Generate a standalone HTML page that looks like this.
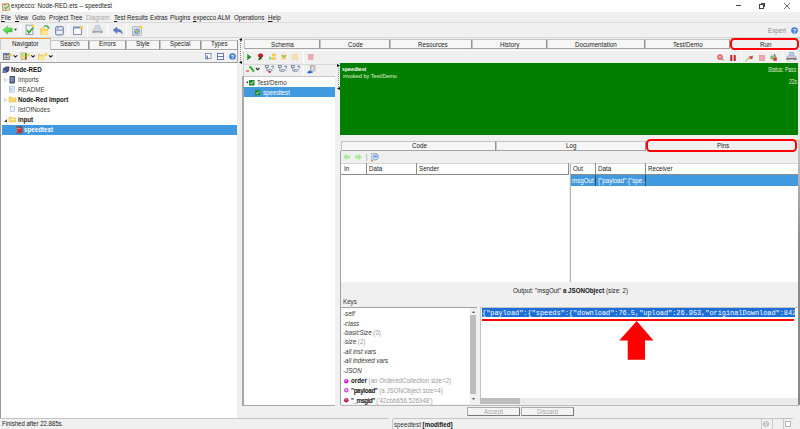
<!DOCTYPE html>
<html><head><meta charset="utf-8">
<style>
*{margin:0;padding:0;box-sizing:border-box}
html,body{width:800px;height:429px;overflow:hidden;background:#f0f0f0;font-family:"Liberation Sans",sans-serif;font-size:6.2px;color:#1a1a1a;position:relative}
.a{position:absolute}
.t{position:absolute;white-space:nowrap;line-height:8px;font-size:6.9px;transform:scaleX(0.9);transform-origin:0 0}
.b{font-weight:bold}
.g{color:#9a9a9a}
.tab{position:absolute;background:#f6f6f6;border:1px solid #c4c4c4;border-right-color:#949494;border-bottom-color:#a4a4a4}
.sep{position:absolute;width:1px;background:#c8c8c8;border-right:1px solid #fff}
.white{background:#fff}
.sel{background:#4199e0}
svg{position:absolute;overflow:visible}
u{text-decoration-thickness:0.7px;text-underline-offset:0.6px}
</style></head><body>
<!-- ================= title bar ================= -->
<div class="a" style="left:0;top:0;width:800px;height:12px;background:#fff"></div>
<svg style="left:0.5px;top:1.5px" width="10" height="9" viewBox="0 0 10 9"><path d="M1 2 L7.5 1.5 L8.8 8 L2 8.6Z" fill="#dce8f8" stroke="#d49a50" stroke-width="1.1" stroke-linejoin="round"/><path d="M2.5 2.2 L5.5 2 L5.3 3.2 L2.6 3.4Z" fill="#c87070"/><path d="M3 5 L4.8 6.8 L8.6 2.6" stroke="#5cc04a" stroke-width="1.3" fill="none"/></svg>
<div class="t" style="left:11px;top:2px;color:#222">expecco: Node-RED.ets -- speedtest</div>
<div class="a" style="left:736px;top:5px;width:5px;height:1px;background:#444"></div>
<div class="a" style="left:759px;top:4px;width:5px;height:5px;border:1px solid #444"></div>
<div class="a" style="left:761px;top:3px;width:4px;height:4px;border-top:1px solid #444;border-right:1px solid #444"></div>
<svg style="left:784px;top:3px" width="6" height="6" viewBox="0 0 6 6"><path d="M0 0L6 6M6 0L0 6" stroke="#444" stroke-width="0.8"/></svg>

<!-- ================= menu ================= -->
<div class="a" style="left:0;top:22px;width:800px;height:1px;background:#dadada"></div>
<div class="t" style="left:1px;top:14px"><u>F</u>ile</div>
<div class="t" style="left:14.6px;top:14px"><u>V</u>iew</div>
<div class="t" style="left:31.5px;top:14px">Goto</div>
<div class="t" style="left:49px;top:14px">Project Tree</div>
<div class="t" style="left:86px;top:14px;color:#a8a8a8">Diagram</div>
<div class="t" style="left:114px;top:14px"><u>T</u>est Results</div>
<div class="t" style="left:149.8px;top:14px">Extras</div>
<div class="t" style="left:170px;top:14px">Plugins</div>
<div class="t" style="left:193px;top:14px"><u>e</u>xpecco ALM</div>
<div class="t" style="left:233.8px;top:14px">Operations</div>
<div class="t" style="left:268px;top:14px"><u>H</u>elp</div>

<!-- ================= toolbar ================= -->
<div class="sep" style="left:20px;top:24px;height:13px"></div>
<div class="sep" style="left:68px;top:24px;height:13px"></div>
<div class="sep" style="left:87px;top:24px;height:13px"></div>
<div class="sep" style="left:107px;top:24px;height:13px"></div>
<div class="sep" style="left:125.5px;top:24px;height:13px"></div>
<!-- green back arrow -->
<svg style="left:0;top:22px" width="20" height="16" viewBox="0 0 20 16"><defs><linearGradient id="ga" x1="0" y1="0" x2="0.6" y2="1"><stop offset="0" stop-color="#9af59a"/><stop offset="1" stop-color="#28c028"/></linearGradient></defs><path d="M2.7 8.1 L7.7 3.8 L7.7 5.9 L12.2 5.9 L12.2 9.9 L7.7 9.9 L7.7 12.3 Z" fill="url(#ga)" stroke="#3cc03c" stroke-width="0.4" stroke-linejoin="round"/><path d="M14 6.8H17.1L15.55 8.8Z" fill="#333"/></svg>
<!-- checkbox doc -->
<svg style="left:25px;top:24px" width="10" height="11" viewBox="0 0 10 11"><rect x="1.1" y="1.2" width="6.8" height="9.2" fill="#f4f6fa" stroke="#7d8ca6" stroke-width="0.8"/><path d="M2.3 5.8 L3.9 8.8 L8.2 3.6" stroke="#22b022" stroke-width="1.5" fill="none"/><circle cx="8" cy="2" r="1.4" fill="#f8d448"/></svg>
<!-- folder -->
<svg style="left:39px;top:24px" width="11" height="11" viewBox="0 0 11 11"><path d="M1.5 4.5 L4 3.5 L5.5 5 L8.5 5 L8.5 10.5 L1.5 10.5 Z" fill="#f5d868" stroke="#e6bc3a" stroke-width="0.5"/><path d="M1.5 10.5 L3 7 L9.5 7 L8.5 10.5Z" fill="#fbe890"/><path d="M5 2.5 Q8 0.8 9.5 3.6" stroke="#2fae2f" stroke-width="1.4" fill="none"/><path d="M8.2 4.6 L10.2 2.6 L10.4 4.8Z" fill="#2fae2f"/></svg>
<!-- save -->
<svg style="left:54.5px;top:25.5px" width="9" height="9.5" viewBox="0 0 9 9.5"><rect x="0.7" y="0.7" width="7.6" height="8.2" rx="1" fill="#e8eef8" stroke="#6474aa" stroke-width="1"/><rect x="1.4" y="3.6" width="6.2" height="0.9" fill="#6474aa"/><rect x="2" y="1.4" width="1.2" height="1.2" fill="#6474aa"/></svg>
<!-- new doc -->
<svg style="left:73px;top:25.5px" width="10" height="9" viewBox="0 0 10 9"><rect x="0.5" y="1" width="8" height="7.5" fill="#fafafa" stroke="#8290b8"/><rect x="0.5" y="1" width="8" height="1.5" fill="#8290b8"/><circle cx="8.5" cy="1.5" r="1.5" fill="#f5d040"/></svg>
<!-- printer -->
<svg style="left:92px;top:25px;opacity:0.65" width="11" height="10" viewBox="0 0 11 10"><defs><linearGradient id="prga" x1="0" y1="0" x2="0" y2="1"><stop offset="0" stop-color="#e8e8e8"/><stop offset="1" stop-color="#8a8a8a"/></linearGradient></defs><path d="M3.5 0.5 L7.5 0.2 L8.3 4.5 L3.2 4.7Z" fill="#b8cdf0" stroke="#7890c0" stroke-width="0.5"/><path d="M0.6 5.5 Q0.6 4 2.5 4 L8.5 4 Q10.4 4 10.4 5.5 L10.4 8 L0.6 8Z" fill="url(#prga)" stroke="#808080" stroke-width="0.4"/><rect x="2.2" y="7.4" width="6.6" height="2.2" fill="#fafafa" stroke="#a0a0a0" stroke-width="0.3"/><rect x="1" y="6.4" width="9" height="0.9" fill="#5a5a5a"/></svg>
<!-- undo -->
<svg style="left:113px;top:27px" width="10" height="7" viewBox="0 0 10 7"><path d="M0 3 L4 0 L4 2 Q9 2 9.5 7 Q8 4.5 4 4.5 L4 6.5 Z" fill="#5d7fc8" stroke="#44609e" stroke-width="0.4"/></svg>
<!-- browser -->
<svg style="left:131.5px;top:25.5px" width="11" height="10" viewBox="0 0 11 10"><rect x="0.5" y="0.5" width="9" height="9" rx="1" fill="#d8e2ef" stroke="#8a9ab5" stroke-width="0.6"/><circle cx="5" cy="5.5" r="3" fill="#6fa8dc"/><path d="M3 4 L7 7" stroke="#f0c020" stroke-width="1.2"/><circle cx="9" cy="1.5" r="1.6" fill="#f5d040"/><circle cx="1.2" cy="8.8" r="0.9" fill="#f08020"/></svg>
<div class="t g" style="left:767.8px;top:26.7px;color:#8a8a8a">Expert</div>
<svg style="left:790.5px;top:27px" width="7" height="7" viewBox="0 0 7 7"><circle cx="3.5" cy="3.5" r="3.3" fill="#3d7fdc"/><text x="3.5" y="5.6" font-size="5.5" font-weight="bold" fill="#fff" text-anchor="middle" font-family="Liberation Sans">?</text></svg>

<div class="a" style="left:0;top:36.8px;width:800px;height:1.6px;background:#d6d6d6"></div>
<!-- ================= left panel ================= -->
<div class="a" style="left:0;top:37.6px;width:50.5px;height:12.4px;background:#f0f0f0;border-top:1.3px solid #f2a546;border-right:1px solid #c0c0c0;border-left:1px solid #c8c8c8"></div>
<div class="t" style="left:12px;top:40px;color:#1a1a1a">Navigator</div>
<div class="tab" style="left:50px;top:39.5px;width:38.5px;height:10px"></div>
<div class="t" style="left:60px;top:40px">Search</div>
<div class="tab" style="left:88.5px;top:39.5px;width:37.2px;height:10px"></div>
<div class="t" style="left:99px;top:40px">Errors</div>
<div class="tab" style="left:125.7px;top:39.5px;width:34px;height:10px"></div>
<div class="t" style="left:135.7px;top:40px">Style</div>
<div class="tab" style="left:159.7px;top:39.5px;width:41px;height:10px"></div>
<div class="t" style="left:169.5px;top:40px">Special</div>
<div class="tab" style="left:200.7px;top:39.5px;width:37px;height:10px"></div>
<div class="t" style="left:210.7px;top:40px">Types</div>
<!-- left toolbar -->
<div class="a" style="left:0;top:49.5px;width:238px;height:1px;background:#fff"></div>
<div class="sep" style="left:55px;top:50px;height:12px"></div>
<div class="a" style="left:0;top:62px;width:238px;height:1px;background:#a0a0a0"></div>
<svg style="left:0;top:50px" width="56" height="12" viewBox="0 0 56 12">
<rect x="3" y="3" width="6.8" height="7" fill="#6e6e6e"/><rect x="3" y="3" width="6.8" height="1.6" fill="#6a80b0"/><rect x="3.8" y="5.3" width="2.3" height="1.6" fill="#d8d8d8"/><rect x="6.7" y="5.3" width="2.3" height="1.6" fill="#d8d8d8"/><rect x="3.8" y="7.6" width="2.3" height="1.6" fill="#d8d8d8"/><rect x="6.7" y="7.6" width="2.3" height="1.6" fill="#d8d8d8"/>
<circle cx="10.6" cy="5.2" r="1.4" fill="#f8d040"/>
<path d="M13.6 5.3 L15.4 7 L17.2 5.3" stroke="#222" stroke-width="1.1" fill="none"/>
<rect x="21" y="3" width="5.6" height="6.6" fill="#ecec90" stroke="#8a8a50" stroke-width="0.5"/><path d="M21.5 5H24.5M21.5 7H24.5" stroke="#b0b060" stroke-width="0.6"/><rect x="25" y="3.2" width="1.5" height="3.5" fill="#20a040"/><rect x="25" y="6.7" width="1.5" height="2.7" fill="#e02020"/>
<circle cx="28.5" cy="5" r="1.4" fill="#f8d040"/>
<path d="M31.2 5.3 L33 7 L34.8 5.3" stroke="#222" stroke-width="1.1" fill="none"/>
<path d="M38.3 4.5 L40.3 4.5 L41 5.3 L44 5.3 L44 9.6 L38.3 9.6Z" fill="#f6d870" stroke="#e2b640" stroke-width="0.5"/><path d="M38.3 9.6 L39.3 6.6 L45 6.6 L44 9.6Z" fill="#fbe99a"/>
<circle cx="46" cy="4.5" r="1.4" fill="#f8d040"/>
<path d="M48.9 5.3 L50.7 7 L52.5 5.3" stroke="#222" stroke-width="1.1" fill="none"/>
</svg>
<svg style="left:205px;top:53px" width="7" height="7" viewBox="0 0 7 7"><rect x="0.5" y="0.5" width="5.5" height="5" fill="#fff" stroke="#6a7fb0" stroke-width="0.8"/><rect x="1.5" y="2.5" width="1.5" height="4" fill="#6a7fb0"/></svg>
<svg style="left:217px;top:53px" width="7" height="7" viewBox="0 0 7 7"><rect x="0.5" y="0.5" width="6" height="6" fill="#fff" stroke="#5a6fa8" stroke-width="0.9"/><rect x="0.5" y="3" width="6" height="0.9" fill="#5a6fa8"/></svg>
<svg style="left:229px;top:53px" width="7" height="7" viewBox="0 0 7 7"><circle cx="3.5" cy="3.5" r="3.3" fill="#3d7fdc"/><text x="3.5" y="5.6" font-size="5.5" font-weight="bold" fill="#fff" text-anchor="middle" font-family="Liberation Sans">?</text></svg>

<!-- tree -->
<div class="a white" style="left:0;top:63px;width:237px;height:354.5px;border-left:1.5px solid #9a9a9a"></div>
<div class="a sel" style="left:1.5px;top:125px;width:235.5px;height:9.5px"></div>
<svg style="left:2px;top:65.5px" width="8" height="7.5" viewBox="0 0 8 7.5"><path d="M1 2.5 L4 0.5 L7.5 0.5 L7 5 L4 7 L0.5 7Z" fill="#34406a"/><path d="M1.2 4 L4 2.2 L6.8 2.2 M1 5.5 L3.8 3.8 L6.6 3.8" stroke="#8090c0" stroke-width="0.5" fill="none"/><path d="M0.5 7 L4 7 L4.5 4.5 L1 4.5Z" fill="#7088c8" opacity="0.8"/></svg>
<div class="t b" style="left:11px;top:66px;color:#111">Node-RED</div>
<svg style="left:4px;top:78px" width="3" height="4" viewBox="0 0 3 4"><path d="M0.4 0.4L2.6 2L0.4 3.6Z" fill="none" stroke="#b0b0b0" stroke-width="0.6"/></svg>
<svg style="left:9px;top:75.5px" width="6.5" height="7.5" viewBox="0 0 6.5 7.5"><path d="M0.5 1 Q0.5 0 1.5 0 L6 0 L6 6.5 Q6 7.5 5 7.5 L0.5 7.5Z" fill="#3c4e78"/><path d="M1.5 2.2H5M1.5 4.2H5M2.4 1V6.5M4.2 1V6.5" stroke="#b8c8e8" stroke-width="0.55"/></svg>
<div class="t" style="left:17.5px;top:76px;color:#3a3a3a">Imports</div>
<svg style="left:9.3px;top:85.8px" width="5.5" height="6.5" viewBox="0 0 5.5 6.5"><rect x="0.3" y="0.3" width="4.9" height="5.9" fill="#e2ecfa" stroke="#9ab4dc" stroke-width="0.6"/><path d="M1.4 2.2 L3 3.3 L1.4 4.4" stroke="#6a8ac0" stroke-width="0.6" fill="none"/></svg>
<div class="t" style="left:17.5px;top:86px;color:#3a3a3a">README</div>
<svg style="left:4px;top:98px" width="3" height="4" viewBox="0 0 3 4"><path d="M0.4 0.4L2.6 2L0.4 3.6Z" fill="none" stroke="#b0b0b0" stroke-width="0.6"/></svg>
<svg style="left:8.5px;top:96px" width="7" height="6" viewBox="0 0 7 6"><path d="M0 1 L2.5 1 L3.5 2 L7 2 L7 6 L0 6Z" fill="#f7da6a" stroke="#d8b040" stroke-width="0.5"/></svg>
<div class="t b" style="left:17.5px;top:96px;color:#111">Node-Red Import</div>
<svg style="left:9.5px;top:106px" width="5" height="6" viewBox="0 0 5 6"><rect x="0.3" y="0.3" width="4.4" height="5.4" fill="#eef3fb" stroke="#8aa5d0" stroke-width="0.5"/></svg>
<div class="t" style="left:17.5px;top:106px;color:#3a3a3a">listOfNodes</div>
<svg style="left:4px;top:119px" width="3" height="3" viewBox="0 0 3 3"><path d="M3 0L3 3L0 3Z" fill="#333"/></svg>
<svg style="left:9px;top:116px" width="7" height="6" viewBox="0 0 7 6"><path d="M0 1 L2.5 1 L3.5 2 L7 2 L7 6 L0 6Z" fill="#f7da6a" stroke="#d8b040" stroke-width="0.5"/><rect x="1" y="3" width="5" height="0.8" fill="#fff3b0"/></svg>
<div class="t b" style="left:17.5px;top:116px;color:#111">input</div>
<svg style="left:15.5px;top:126px" width="6.5" height="7.5" viewBox="0 0 6.5 7.5"><rect x="0" y="0" width="6.5" height="7.5" fill="#5a6070"/><rect x="1.8" y="1.6" width="4" height="5" fill="#e02828"/><path d="M0.8 1.5V6.5M1.2 2.5H5" stroke="#d8d8d8" stroke-width="0.5"/></svg>
<div class="t b" style="left:24px;top:126px;color:#fff">speedtest</div>

<!-- left bottom border line -->
<div class="a" style="left:0;top:417.8px;width:793px;height:1.5px;background:#c4c4c4"></div>

<!-- splitter -->
<div class="a" style="left:239.5px;top:40px;width:1px;height:22px;border-left:1px dotted #8a8a8a"></div>
<div class="a" style="left:237px;top:49.5px;width:1px;height:13px;background:#a8a8a8"></div>
<div class="a" style="left:242.5px;top:49.5px;width:1px;height:26px;background:#d0d0d0"></div>
<svg style="left:239px;top:37.5px" width="3" height="3" viewBox="0 0 3 3"><path d="M0 1.5L3 0L3 3Z" fill="#111"/></svg>
<svg style="left:239px;top:61px" width="3" height="3" viewBox="0 0 3 3"><path d="M0 1.5L3 0L3 3Z" fill="#111"/></svg>

<!-- ================= right panel tabs ================= -->
<div class="tab" style="left:243.7px;top:39.2px;width:76.5px;height:10px"></div>
<div class="t" style="left:270.8px;top:40.5px">Schema</div>
<div class="tab" style="left:320.2px;top:39.2px;width:69.5px;height:10px"></div>
<div class="t" style="left:347.6px;top:40.5px">Code</div>
<div class="tab" style="left:389.7px;top:39.2px;width:82.7px;height:10px"></div>
<div class="t" style="left:417.8px;top:40.5px">Resources</div>
<div class="tab" style="left:472.4px;top:39.2px;width:74.4px;height:10px"></div>
<div class="t" style="left:499.5px;top:40.5px">History</div>
<div class="tab" style="left:546.8px;top:39.2px;width:98px;height:10px"></div>
<div class="t" style="left:574.5px;top:40.5px">Documentation</div>
<div class="tab" style="left:644.8px;top:39.2px;width:85.5px;height:10px"></div>
<div class="t" style="left:672.5px;top:40.5px">Test/Demo</div>
<div class="a" style="left:730.5px;top:37.5px;width:67.5px;height:12.5px;background:#f0f0f0;border-top:1.5px solid #f0a23c"></div>
<div class="t" style="left:759.8px;top:40.5px">Run</div>
<div class="a" style="left:730px;top:38px;width:69px;height:12.3px;border:2.2px solid #f00;border-radius:4.5px"></div>

<!-- right toolbar row1 -->
<div class="a" style="left:243px;top:49.5px;width:557px;height:1px;background:#fff"></div>
<div class="sep" style="left:302.5px;top:51px;height:12px"></div>
<div class="sep" style="left:740.5px;top:51px;height:12px"></div>
<div class="sep" style="left:781.5px;top:51px;height:12px"></div>
<svg style="left:242px;top:50px" width="76" height="14" viewBox="0 0 76 14">
<defs><linearGradient id="pg" x1="0" y1="0" x2="1" y2="1"><stop offset="0" stop-color="#40b040"/><stop offset="1" stop-color="#0a700a"/></linearGradient></defs>
<path d="M5.2 3.8 L9.5 7 L5.2 10.2Z" fill="url(#pg)"/>
<path d="M16.2 9.8 Q16.8 7 19 6.8 L20 8.5 Q18 9.5 17 10.2Z" fill="#1a5a1a"/><ellipse cx="18.6" cy="5.6" rx="2.3" ry="1.9" fill="#e81818" stroke="#401010" stroke-width="0.5"/>
<path d="M27 6.2 L30.5 8.2 L27 10.2Z" fill="#90d870"/><rect x="30" y="3.6" width="3.8" height="2.8" fill="#f5cc50"/><rect x="30" y="7.2" width="3.8" height="2.8" fill="#f5cc50"/>
<rect x="39.5" y="4.6" width="4.6" height="4.8" fill="#f5d070"/><path d="M39.8 4.9 L41.8 7.2 L43.8 4.9" stroke="#70b050" stroke-width="1" fill="none"/>
<rect x="50.3" y="4" width="1.8" height="6" rx="0.5" fill="#fae3a8" stroke="#eac878" stroke-width="0.4"/><rect x="53.6" y="4" width="1.8" height="6" rx="0.5" fill="#fae3a8" stroke="#eac878" stroke-width="0.4"/>
<rect x="66.3" y="4.5" width="4.8" height="5" fill="#f0a8b0" stroke="#e08a94" stroke-width="0.4"/>
</svg>

<svg style="left:717px;top:54px" width="7" height="7" viewBox="0 0 7 7"><path d="M4.6 4.6L6.6 6.6" stroke="#90a080" stroke-width="1.3"/><circle cx="3" cy="3" r="2.6" fill="#f07070" stroke="#d04848" stroke-width="0.5"/><path d="M1.7 3H4.3" stroke="#fff" stroke-width="0.9"/></svg>
<svg style="left:730px;top:54.5px" width="6" height="6" viewBox="0 0 6 6"><rect x="0.3" y="0" width="2" height="6" fill="#c02020"/><rect x="3.7" y="0" width="2" height="6" fill="#c02020"/></svg>
<svg style="left:745px;top:53.5px" width="9" height="8" viewBox="0 0 9 8"><path d="M0.5 7.5 L2.5 4.5 L3.5 5.5 L5 2.5" stroke="#c8c870" stroke-width="1.3" fill="none"/><path d="M3 3 L8.5 1.5 L6.5 5.5Z" fill="#9098a0"/><circle cx="6.2" cy="3.5" r="1.6" fill="#e04040"/></svg>
<svg style="left:759px;top:55px" width="6" height="6" viewBox="0 0 6 6"><rect x="0.3" y="0.3" width="5.4" height="5.4" fill="#f0a8a8" stroke="#d88" stroke-width="0.5"/></svg>
<svg style="left:770px;top:54px" width="7" height="7" viewBox="0 0 7 7"><circle cx="2.5" cy="3.5" r="2.3" fill="#7ac070"/><rect x="3.5" y="3.5" width="3.3" height="3.3" fill="#e03030"/><path d="M4 0L6 3" stroke="#222" stroke-width="0.8"/></svg>
<svg style="left:785.5px;top:52px" width="11" height="10" viewBox="0 0 11 10"><defs><linearGradient id="prgb" x1="0" y1="0" x2="0" y2="1"><stop offset="0" stop-color="#e8e8e8"/><stop offset="1" stop-color="#8a8a8a"/></linearGradient></defs><path d="M3.5 0.5 L7.5 0.2 L8.3 4.5 L3.2 4.7Z" fill="#b8cdf0" stroke="#7890c0" stroke-width="0.5"/><path d="M0.6 5.5 Q0.6 4 2.5 4 L8.5 4 Q10.4 4 10.4 5.5 L10.4 8 L0.6 8Z" fill="url(#prgb)" stroke="#808080" stroke-width="0.4"/><rect x="2.2" y="7.4" width="6.6" height="2.2" fill="#fafafa" stroke="#a0a0a0" stroke-width="0.3"/><rect x="1" y="6.4" width="9" height="0.9" fill="#5a5a5a"/></svg>

<!-- right toolbar row2 (tree) -->
<div class="a" style="left:243px;top:63.5px;width:94px;height:1px;background:#d8d8d8"></div>
<div class="sep" style="left:261px;top:64.5px;height:10px"></div>
<div class="sep" style="left:303px;top:64.5px;height:10px"></div>
<svg style="left:242px;top:62px" width="76" height="14" viewBox="0 0 76 14">
<rect x="4" y="8.4" width="3" height="1.2" fill="#d04848"/><circle cx="8.3" cy="5.2" r="1.2" fill="#30b030"/><circle cx="9.9" cy="7" r="1.2" fill="#30b030"/><circle cx="11.3" cy="8.8" r="1.2" fill="#30b030"/><circle cx="9.8" cy="4.6" r="0.6" fill="#7ad07a"/>
<path d="M14 6 L15.7 7.8 L17.4 6" stroke="#222" stroke-width="1.1" fill="none"/>
<g transform="translate(23,0)"><rect x="0.3" y="3.6" width="3" height="1.8" fill="none" stroke="#5a6a8a" stroke-width="0.7"/><path d="M1.8 5.4 V9 H4" stroke="#5a6a8a" stroke-width="0.7" fill="none"/><rect x="3.8" y="7.6" width="2.4" height="2" fill="none" stroke="#5a7aa0" stroke-width="0.6"/><path d="M6.6 5 Q6.8 3.6 8 3.8 Q9.2 4.2 8.3 5.6 L7.8 6.6 M7.8 7.8 V8.6" stroke="#44608e" stroke-width="0.8" fill="none"/><circle cx="4.6" cy="10" r="1.1" fill="#d81818"/></g><g transform="translate(36,0)"><rect x="0.3" y="3.6" width="3" height="1.8" fill="none" stroke="#5a6a8a" stroke-width="0.7"/><path d="M1.8 5.4 V9 H4" stroke="#5a6a8a" stroke-width="0.7" fill="none"/><rect x="3.8" y="7.6" width="2.4" height="2" fill="none" stroke="#5a7aa0" stroke-width="0.6"/><path d="M6.6 5 Q6.8 3.6 8 3.8 Q9.2 4.2 8.3 5.6 L7.8 6.6 M7.8 7.8 V8.6" stroke="#44608e" stroke-width="0.8" fill="none"/></g><g transform="translate(49,0)"><rect x="0.3" y="3.6" width="3" height="1.8" fill="none" stroke="#5a6a8a" stroke-width="0.7"/><path d="M1.8 5.4 V9 H4" stroke="#5a6a8a" stroke-width="0.7" fill="none"/><rect x="3.8" y="7.6" width="2.4" height="2" fill="none" stroke="#5a7aa0" stroke-width="0.6"/><path d="M6.6 5 Q6.8 3.6 8 3.8 Q9.2 4.2 8.3 5.6 L7.8 6.6 M7.8 7.8 V8.6" stroke="#44608e" stroke-width="0.8" fill="none"/></g>
<rect x="68.5" y="3.8" width="4.5" height="5.2" fill="#f4f4f4" stroke="#8a8a8a" stroke-width="0.6"/><circle cx="70.5" cy="6" r="1.6" fill="none" stroke="#888" stroke-width="0.6"/><path d="M65 10.5 L67.8 8 L67.8 9.2 L70.5 9.2 L70.5 11 L67.8 11 L67.8 12Z" fill="#2e6ad8"/>
</svg>


<!-- tree panel -->
<div class="a white" style="left:241.8px;top:75.5px;width:93.5px;height:330.5px;border-left:2.2px solid #a8a8a8;border-top:1px solid #c8c8c8;border-bottom:1px solid #a8a8a8"></div>
<div class="a" style="left:336px;top:75.5px;width:4px;height:330px;background:#f0f0f0"></div>
<div class="a sel" style="left:243.8px;top:87px;width:91.2px;height:9.8px"></div>
<div class="a" style="left:337.5px;top:66px;width:1px;height:21px;border-left:1px dotted #8a8a8a"></div>
<svg style="left:336.5px;top:63.5px" width="3" height="3" viewBox="0 0 3 3"><path d="M3 1.5L0 0L0 3Z" fill="#111"/></svg>
<svg style="left:336.5px;top:87px" width="3" height="3" viewBox="0 0 3 3"><path d="M0 1.5L3 0L3 3Z" fill="#111"/></svg>
<svg style="left:245.5px;top:81px" width="2" height="2" viewBox="0 0 2 2"><path d="M2 0L2 2L0 2Z" fill="#222"/></svg>
<svg style="left:249.4px;top:79.5px" width="5.5" height="5.5" viewBox="0 0 5.5 5.5"><rect x="0" y="0" width="5.5" height="5.5" fill="#1a8a2a"/><path d="M1.3 2.8L2.4 4L4.3 1.5" stroke="#fff" stroke-width="0.9" fill="none"/></svg>
<div class="t" style="left:257.4px;top:78.5px;color:#333">Test/Demo</div>
<svg style="left:255.4px;top:89.8px" width="5.2" height="5.2" viewBox="0 0 5.5 5.5"><rect x="0" y="0" width="5.5" height="5.5" fill="#1a8a2a"/><path d="M1.3 2.8L2.4 4L4.3 1.5" stroke="#fff" stroke-width="0.9" fill="none"/></svg>
<div class="t" style="left:263px;top:88.5px;color:#fff">speedtest</div>

<!-- green -->
<div class="a" style="left:340px;top:63px;width:458.6px;height:72.3px;background:#007e00"></div>
<div class="t b" style="left:342.2px;top:65px;color:#fff;font-size:5.8px">speedtest</div>
<div class="t" style="left:342.5px;top:72px;color:#e6f2d6;font-size:6.1px">invoked by Test/Demo</div>
<div class="t" style="left:768px;top:65.6px;color:#e0eed0;font-size:6.6px;transform:scaleX(0.76)">Status: Pass</div>
<div class="t" style="left:789px;top:77.6px;color:#e0eed0;font-size:6.6px;transform:scaleX(0.76)">22s</div>
<div class="a" style="left:798.4px;top:50px;width:1.6px;height:90px;background:#e8e8e8"></div><div class="a" style="left:798.4px;top:140px;width:1.6px;height:265px;background:linear-gradient(#c8c8c8,#8a8a8a 40%,#8a8a8a)"></div>

<!-- sub tabs -->
<div class="tab" style="left:341.3px;top:140.5px;width:155px;height:10.5px"></div>
<div class="t" style="left:411.7px;top:142px">Code</div>
<div class="tab" style="left:496.3px;top:140.5px;width:149.5px;height:10.5px"></div>
<div class="t" style="left:566px;top:142px">Log</div>
<div class="a" style="left:646.5px;top:139.5px;width:151px;height:12px;background:#f0f0f0;border-top:1.5px solid #f0a23c"></div>
<div class="t" style="left:716.5px;top:142px">Pins</div>
<div class="a" style="left:646px;top:139.4px;width:151px;height:12.2px;border:2.2px solid #f00;border-radius:4.5px"></div>

<!-- sub toolbar -->
<div class="a" style="left:339.8px;top:151px;width:1.2px;height:254px;background:#a0a0a0"></div>
<svg style="left:340px;top:150px" width="44" height="14" viewBox="0 0 44 14"><path d="M3.2 7 L6.5 3.8 L6.5 5.6 L10 5.6 L10 8.4 L6.5 8.4 L6.5 10.2Z" fill="#aee8a0" stroke="#c8f0c0" stroke-width="0.6" stroke-linejoin="round"/><path d="M22 7 L18.7 3.8 L18.7 5.6 L15.2 5.6 L15.2 8.4 L18.7 8.4 L18.7 10.2Z" fill="#aee8a0" stroke="#c8f0c0" stroke-width="0.6" stroke-linejoin="round"/><rect x="26.3" y="4" width="0.8" height="7" fill="#b0b0b0"/><rect x="31.3" y="3.2" width="5" height="6.8" fill="#f4f6fa" stroke="#909aa8" stroke-width="0.5"/><circle cx="35.6" cy="6.8" r="2.9" fill="#bfe8f4" stroke="#6a8ad8" stroke-width="0.7"/><rect x="34" y="5.9" width="3.2" height="1" fill="#5a5ae0"/><circle cx="32" cy="10.8" r="1" fill="#f09030"/></svg>

<!-- tables -->
<div class="a white" style="left:341px;top:162.5px;width:228px;height:119.3px;border-top:1px solid #d4d4d4"></div>
<div class="a" style="left:341px;top:173.8px;width:228px;height:1px;background:#8c8c8c"></div>
<div class="a" style="left:365.8px;top:163px;width:1px;height:11px;background:#8c8c8c"></div>
<div class="a" style="left:415.8px;top:163px;width:1px;height:11px;background:#8c8c8c"></div>
<div class="a" style="left:568px;top:163px;width:1px;height:11.5px;background:#8c8c8c"></div>
<div class="t" style="left:344px;top:165px">In</div>
<div class="t" style="left:369px;top:165px">Data</div>
<div class="t" style="left:419px;top:165px">Sender</div>
<div class="a white" style="left:570px;top:162.5px;width:228px;height:119.3px;border-top:1px solid #d4d4d4;border-left:1px solid #b4b4b4"></div>
<div class="a" style="left:571px;top:173.8px;width:227px;height:1px;background:#8c8c8c"></div>
<div class="a" style="left:595.2px;top:163px;width:1px;height:11px;background:#8c8c8c"></div>
<div class="a" style="left:645px;top:163px;width:1px;height:11px;background:#8c8c8c"></div>
<div class="t" style="left:572.5px;top:165px">Out</div>
<div class="t" style="left:598px;top:165px">Data</div>
<div class="t" style="left:648px;top:165px">Receiver</div>
<div class="a sel" style="left:571px;top:174.8px;width:227px;height:11.3px"></div>
<div class="a" style="left:595.2px;top:174.8px;width:1px;height:11.3px;background:#2a4a6a"></div>
<div class="a" style="left:645px;top:174.8px;width:1px;height:11.3px;background:#2a4a6a"></div>
<div class="t" style="left:572px;top:176.5px;color:#fff">msgOut</div>
<div class="t" style="left:598px;top:176.5px;color:#fff">{"payload":{"spe..</div>

<!-- output -->
<div class="t" style="left:513.3px;top:287px;color:#222">Output: "msgOut" <b style="color:#111">a JSONObject</b> (size: 2)</div>
<div class="t" style="left:343px;top:298px;color:#333">Keys</div>
<div class="a white" style="left:341px;top:307px;width:136px;height:97px;border-top:1px solid #a0a0a0"></div>
<div class="a" style="left:470px;top:308px;width:6.5px;height:96px;background:#f0f0f0"></div>
<div class="a" style="left:469.8px;top:315px;width:6.2px;height:79px;background:#bdbdbd"></div>
<svg style="left:472px;top:311px" width="3" height="2" viewBox="0 0 3 2"><path d="M0 2H3L1.5 0Z" fill="#555"/></svg>
<svg style="left:472px;top:398px" width="3" height="2" viewBox="0 0 3 2"><path d="M0 0H3L1.5 2Z" fill="#555"/></svg>
<div class="t" style="left:343px;top:310px;font-style:italic;color:#333">-self</div>
<div class="t" style="left:343px;top:319.5px;font-style:italic;color:#333">-class</div>
<div class="t" style="left:343px;top:329px;font-style:italic;color:#333">-basicSize <span class="g" style="font-style:normal">(0)</span></div>
<div class="t" style="left:343px;top:338.3px;font-style:italic;color:#333">-size <span class="g" style="font-style:normal">(2)</span></div>
<div class="t" style="left:343px;top:348px;font-style:italic;color:#333">-all inst vars</div>
<div class="t" style="left:343px;top:357.3px;font-style:italic;color:#333">-all indexed vars</div>
<div class="t" style="left:343px;top:367.2px;font-style:italic;color:#333">-JSON</div>
<svg style="left:344px;top:378.7px" width="4.5" height="4.5" viewBox="0 0 5 5"><circle cx="2.5" cy="2.5" r="2.3" fill="#e818e8" stroke="#a010a0" stroke-width="0.4"/><circle cx="2.2" cy="2" r="0.8" fill="#ffb0ff"/></svg>
<div class="t" style="left:351px;top:377.3px"><b style="color:#111">order</b> <span class="g">(an OrderedCollection size=2)</span></div>
<svg style="left:344px;top:388px" width="4.5" height="4.5" viewBox="0 0 5 5"><circle cx="2.5" cy="2.5" r="2.3" fill="#d850d8" stroke="#9a2a9a" stroke-width="0.4"/><circle cx="2.5" cy="2.4" r="1" fill="#fde0fd"/></svg>
<div class="t" style="left:351px;top:387px"><b style="color:#111;letter-spacing:-0.35px">"payload"</b> <span class="g">(a JSONObject size=4)</span></div>
<svg style="left:344px;top:397.8px" width="4.5" height="4.5" viewBox="0 0 5 5"><circle cx="2.5" cy="2.5" r="2.3" fill="#c8184a" stroke="#801030" stroke-width="0.4"/><circle cx="2.2" cy="2" r="0.8" fill="#f8a0b8"/></svg>
<div class="t" style="left:351px;top:396.7px"><b style="color:#111;letter-spacing:-0.55px">"_msgid"</b> <span class="g">('42cbb656.526948')</span></div>

<div class="a white" style="left:480px;top:307px;width:318px;height:97px;border-left:1px solid #c4c4c4;border-top:1px solid #c4c4c4"></div>
<div class="a sel" style="left:481.5px;top:308.2px;width:313.5px;height:9.2px;background:#1d6fd6"></div>
<div class="t" style="left:482px;top:309px;color:#fff;font-family:'Liberation Mono',monospace;font-size:6.9px;line-height:8px;transform:none;-webkit-text-stroke:0">{"payload":{"speeds":{"download":76.5,"upload":26.953,"originalDownload":842</div>
<div class="a" style="left:482.4px;top:319px;width:311.6px;height:2px;background:#f00"></div>
<svg style="left:619px;top:321px" width="35" height="39" viewBox="0 0 35 39"><path d="M17.7 0 L34.5 19.4 L26 19.4 L26 38.8 L8.7 38.8 L8.7 19.4 L0.2 19.4 Z" fill="#f00"/></svg>
<div class="a" style="left:481px;top:398px;width:316.5px;height:5.7px;background:#ebebeb"></div>
<div class="a" style="left:480px;top:398px;width:40px;height:5.7px;background:#bdbdbd"></div>

<!-- panel bottom -->
<div class="a" style="left:341px;top:404.8px;width:458px;height:1.2px;background:#b8b8b8"></div>

<!-- buttons -->
<div class="a" style="left:467px;top:406.7px;width:52.5px;height:9.5px;border:1px solid #aaa;border-right-color:#777;border-bottom-color:#777;background:#f3f3f3"></div>
<div class="t" style="left:484px;top:407.7px;color:#a8a8a8">Accept</div>
<div class="a" style="left:521.4px;top:406.7px;width:52.5px;height:9.5px;border:1px solid #aaa;border-right-color:#777;border-bottom-color:#777;background:#f3f3f3"></div>
<div class="t" style="left:537px;top:407.7px;color:#a8a8a8">Discard</div>

<!-- status -->

<div class="t" style="left:2px;top:420px;color:#222;font-size:6.7px">Finished after 22.885s.</div>
<div class="a" style="left:389px;top:417px;width:3.5px;height:3px;background:#f0f0f0"></div><div class="a" style="left:392.3px;top:419px;width:1px;height:10px;background:#c8c8c8"></div>
<div class="t" style="left:394px;top:420.5px;color:#333">speedtest <b style="color:#111">[modified]</b></div>
<div class="a" style="left:761px;top:419px;width:1px;height:10px;background:#c8c8c8"></div>
<div class="a" style="left:771.5px;top:419px;width:1px;height:10px;background:#c8c8c8"></div>
<div class="a" style="left:782.5px;top:419px;width:1px;height:10px;background:#c8c8c8"></div>
<svg style="left:763px;top:420.5px" width="6" height="6" viewBox="0 0 6 6"><circle cx="3" cy="3" r="2.5" fill="none" stroke="#999" stroke-width="0.7"/><path d="M0.5 3H5.5" stroke="#999" stroke-width="0.7"/></svg>
<svg style="left:785px;top:420.5px" width="6" height="6" viewBox="0 0 6 6"><rect x="0.5" y="0.5" width="5" height="5" fill="#fff" stroke="#999" stroke-width="0.7"/></svg>
</body></html>
